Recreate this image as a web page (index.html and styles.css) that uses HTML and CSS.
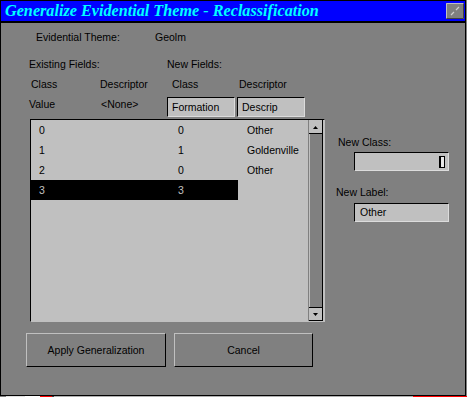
FILE: index.html
```html
<!DOCTYPE html>
<html lang="en">

<head>
    <meta charset="UTF-8" />
    <title>Generalize Evidential Theme - Reclassification</title>
    <link rel="stylesheet" href="styles.css">
</head>

<body>
    <div class="window">
        <div class="titlebar">
            <span class="title">Generalize Evidential Theme - Reclassification</span>
            <span class="close">
                <svg width="18" height="16" viewBox="0 0 18 16">
                    <rect x="0" y="0" width="18" height="16" fill="#808080" />
                    <path d="M0.5 15.5V0.5H17.5" stroke="#c0c0c0" fill="none" />
                    <path d="M17.5 0.5V15.5H0.5" stroke="#404040" fill="none" />
                    <path d="M5 12L8 9M10 7L13 4" stroke="#d0d0d0" stroke-width="1.2" />
                </svg>
            </span>
        </div>

        <div class="theme-row">
            <span class="theme-label">Evidential Theme:</span>
            <span>Geolm</span>
        </div>

        <div class="fields">
            <span class="span2">Existing Fields:</span>
            <span class="span2">New Fields:</span>
            <span class="pl2">Class</span>
            <span>Descriptor</span>
            <span class="pl5">Class</span>
            <span class="pl2">Descriptor</span>
            <span>Value</span>
            <span class="pl1">&lt;None&gt;</span>
            <div class="edit">Formation</div>
            <div class="edit">Descrip</div>
        </div>

        <div class="main">
            <div class="listbox">
                <div class="rows">
                    <div class="row">
                        <div class="pair"><span class="c1">0</span><span>0</span></div>
                        <span class="c3">Other</span>
                    </div>
                    <div class="row">
                        <div class="pair"><span class="c1">1</span><span>1</span></div>
                        <span class="c3">Goldenville</span>
                    </div>
                    <div class="row">
                        <div class="pair"><span class="c1">2</span><span>0</span></div>
                        <span class="c3">Other</span>
                    </div>
                    <div class="row selected">
                        <div class="pair"><span class="c1">3</span><span>3</span></div>
                        <span class="c3"></span>
                    </div>
                </div>
                <div class="scrollbar">
                    <div class="arrow up">
                        <svg width="5" height="3" viewBox="0 0 5 3"><path d="M2.5 0L5 3H0Z" fill="#000" /></svg>
                    </div>
                    <div class="thumb"></div>
                    <div class="arrow down">
                        <svg width="5" height="3" viewBox="0 0 5 3"><path d="M0 0H5L2.5 3Z" fill="#000" /></svg>
                    </div>
                </div>
            </div>

            <div class="side">
                <div class="side-label pl2">New Class:</div>
                <div class="side-edit caret-edit"><span class="caret"></span></div>
                <div class="side-label gap">New Label:</div>
                <div class="side-edit second">Other</div>
            </div>
        </div>

        <div class="buttons">
            <button class="btn apply">Apply Generalization</button>
            <button class="btn cancel">Cancel</button>
        </div>
    </div>
    <div class="taskbar"></div>
</body>

</html>
```

FILE: styles.css
```css
body {
    margin: 0;
    background-color: #808080;
    font-family: "Liberation Sans", Arial, sans-serif;
    font-size: 10.5px;
    color: #000;
}

.window {
    box-sizing: border-box;
    width: 466px;
    height: 396px;
    border: 1px solid #000;
    background-color: #808080;
}

.titlebar {
    height: 20px;
    border-bottom: 2px solid #000;
    background-color: #0000ff;
    display: flex;
    align-items: center;
    justify-content: space-between;
    padding: 0 1px 0 4px;
}

.title {
    font-family: "Liberation Serif", "Times New Roman", serif;
    font-style: italic;
    font-weight: bold;
    font-size: 16.2px;
    color: #00ffff;
    line-height: 20px;
}

.close {
    display: flex;
    width: 18px;
    height: 16px;
}

.theme-row {
    display: flex;
    margin-top: 4px;
    height: 20px;
    line-height: 20px;
    padding-left: 35px;
}

.theme-label {
    width: 119px;
}

.fields {
    display: grid;
    grid-template-columns: 71px 67px 70px 68px;
    grid-template-rows: 20px 20px 23px;
    margin: 7px 0 0 28px;
    line-height: 20px;
}

.span2 {
    grid-column: span 2;
}

.pl1 {
    padding-left: 1px;
}

.pl2 {
    padding-left: 2px;
}

.pl5 {
    padding-left: 5px;
}

.edit {
    box-sizing: border-box;
    width: 68px;
    height: 20px;
    margin-top: 3px;
    border-top: 1px solid #000;
    border-left: 1px solid #000;
    border-right: 1px solid #dcdcdc;
    border-bottom: 1px solid #dcdcdc;
    background-color: #c0c0c0;
    padding-left: 4px;
    line-height: 18px;
}

.main {
    display: flex;
    margin: 2px 0 0 29px;
}

.listbox {
    box-sizing: border-box;
    width: 295px;
    height: 203px;
    display: flex;
    border-top: 1px solid #000;
    border-left: 1px solid #000;
    border-right: 1px solid #c0c0c0;
    border-bottom: 1px solid #c0c0c0;
    background-color: #c0c0c0;
}

.rows {
    width: 277px;
}

.row {
    display: flex;
    height: 20px;
    line-height: 20px;
}

.pair {
    display: flex;
    width: 207px;
}

.c1 {
    box-sizing: border-box;
    width: 147px;
    padding-left: 8px;
}

.c3 {
    padding-left: 9px;
}

.selected .pair {
    background-color: #000;
    color: #c0c0c0;
}

.scrollbar {
    box-sizing: border-box;
    width: 15px;
    margin-right: 1px;
    display: flex;
    flex-direction: column;
    border-left: 1px solid #808080;
    border-right: 1px solid #000;
}

.arrow {
    box-sizing: border-box;
    display: flex;
    align-items: center;
    justify-content: center;
    background-color: #c0c0c0;
}

.arrow.up {
    height: 14px;
    border-top: 1px solid #c0c0c0;
    border-bottom: 1px solid #000;
}

.arrow.down {
    height: 14px;
    border-top: 1px solid #000;
    border-bottom: 1px solid #000;
}

.thumb {
    flex: 1;
    background-color: #808080;
    border-left: 1px solid #c0c0c0;
}

.side {
    margin-left: 11px;
    padding-top: 15px;
}

.side-label {
    height: 16px;
    line-height: 16px;
}

.side-label.gap {
    margin-top: 13px;
}

.side-edit {
    box-sizing: border-box;
    width: 95px;
    height: 19px;
    margin: 2px 0 0 18px;
    border-top: 1px solid #000;
    border-left: 1px solid #000;
    border-right: 1px solid #dcdcdc;
    border-bottom: 1px solid #dcdcdc;
    background-color: #c0c0c0;
    padding-left: 5px;
    line-height: 17px;
}

.side-edit.second {
    margin-top: 3px;
}

.caret-edit {
    display: flex;
    align-items: center;
    justify-content: flex-end;
    padding-right: 3px;
}

.caret {
    box-sizing: border-box;
    width: 6px;
    height: 12px;
    border: 1px solid #000;
    border-left-width: 2px;
    background-color: #e8e8e8;
}

.buttons {
    display: flex;
    gap: 8px;
    margin: 11px 0 0 25px;
}

.btn {
    box-sizing: border-box;
    height: 34px;
    padding: 0;
    font-family: inherit;
    font-size: 10.5px;
    color: #000;
    background-color: #808080;
    border-top: 1px solid #c0c0c0;
    border-left: 1px solid #c0c0c0;
    border-right: 1px solid #000;
    border-bottom: 1px solid #000;
}

.apply {
    width: 140px;
}

.cancel {
    width: 139px;
}

.taskbar {
    height: 1px;
    background: linear-gradient(to right, #808080 0 6px, #e0e0e0 6px 25px, #fff 25px 40px, #f00 40px 52px, #404040 52px 54px, #b0b0b0 54px 413px, #f00 413px);
}
```
